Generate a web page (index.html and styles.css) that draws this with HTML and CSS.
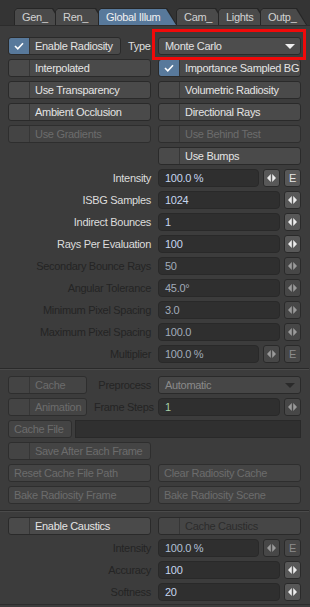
FILE: index.html
```html
<!DOCTYPE html>
<html>
    <head>
        <title>Global Illumination</title>
        <meta charset="utf-8">
        <link rel="stylesheet" href="styles.css">
    </head>
    <body>
        <div class="tabbar">
            <div class="tab gen"><span>Gen_</span></div>
            <div class="tab ren"><span>Ren_</span></div>
            <div class="tab gi on"><span>Global Illum</span></div>
            <div class="tab cam"><span>Cam_</span></div>
            <div class="tab lights"><span>Lights</span></div>
            <div class="tab outp"><span>Outp_</span></div>
        </div>

        <div class="panel">
            <div class="grid">
                <div class="pair">
                    <div class="btn chk w113"><i class="box on"><svg width="10" height="8" viewBox="0 0 10 8"><polyline points="1,4 3.8,6.8 9,1.2" fill="none" stroke="#fff" stroke-width="1.6"/></svg></i><b>Enable Radiosity</b></div>
                    <span class="type">Type</span>
                </div>
                <div class="drop mark">Monte Carlo<i class="tri"></i></div>

                <div class="btn chk"><i class="box"></i><b>Interpolated</b></div>
                <div class="btn chk"><i class="box on"><svg width="10" height="8" viewBox="0 0 10 8"><polyline points="1,4 3.8,6.8 9,1.2" fill="none" stroke="#fff" stroke-width="1.6"/></svg></i><b>Importance Sampled BG</b></div>

                <div class="btn chk"><i class="box"></i><b>Use Transparency</b></div>
                <div class="btn chk"><i class="box"></i><b>Volumetric Radiosity</b></div>

                <div class="btn chk"><i class="box"></i><b>Ambient Occlusion</b></div>
                <div class="btn chk"><i class="box"></i><b>Directional Rays</b></div>

                <div class="btn chk dim"><i class="box"></i><b>Use Gradients</b></div>
                <div class="btn chk dim"><i class="box"></i><b>Use Behind Test</b></div>

                <div></div>
                <div class="btn chk"><i class="box"></i><b>Use Bumps</b></div>

                <div class="lbl">Intensity</div>
                <div class="val"><span class="field">100.0 %</span><span class="arr"><svg width="9" height="8" viewBox="0 0 9 8"><path d="M0 4L3.8 0V8ZM5.2 0L9 4L5.2 8Z"/></svg></span><span class="arr">E</span></div>

                <div class="lbl">ISBG Samples</div>
                <div class="val"><span class="field">1024</span><span class="arr"><svg width="9" height="8" viewBox="0 0 9 8"><path d="M0 4L3.8 0V8ZM5.2 0L9 4L5.2 8Z"/></svg></span></div>

                <div class="lbl">Indirect Bounces</div>
                <div class="val"><span class="field">1</span><span class="arr"><svg width="9" height="8" viewBox="0 0 9 8"><path d="M0 4L3.8 0V8ZM5.2 0L9 4L5.2 8Z"/></svg></span></div>

                <div class="lbl">Rays Per Evaluation</div>
                <div class="val"><span class="field">100</span><span class="arr"><svg width="9" height="8" viewBox="0 0 9 8"><path d="M0 4L3.8 0V8ZM5.2 0L9 4L5.2 8Z"/></svg></span></div>

                <div class="lbl dim">Secondary Bounce Rays</div>
                <div class="val off"><span class="field">50</span><span class="arr"><svg width="9" height="8" viewBox="0 0 9 8"><path d="M0 4L3.8 0V8ZM5.2 0L9 4L5.2 8Z"/></svg></span></div>

                <div class="lbl dim">Angular Tolerance</div>
                <div class="val off"><span class="field">45.0°</span><span class="arr"><svg width="9" height="8" viewBox="0 0 9 8"><path d="M0 4L3.8 0V8ZM5.2 0L9 4L5.2 8Z"/></svg></span></div>

                <div class="lbl dim">Minimum Pixel Spacing</div>
                <div class="val off"><span class="field">3.0</span><span class="arr"><svg width="9" height="8" viewBox="0 0 9 8"><path d="M0 4L3.8 0V8ZM5.2 0L9 4L5.2 8Z"/></svg></span></div>

                <div class="lbl dim">Maximum Pixel Spacing</div>
                <div class="val off"><span class="field">100.0</span><span class="arr"><svg width="9" height="8" viewBox="0 0 9 8"><path d="M0 4L3.8 0V8ZM5.2 0L9 4L5.2 8Z"/></svg></span></div>

                <div class="lbl dim">Multiplier</div>
                <div class="val off"><span class="field">100.0 %</span><span class="arr"><svg width="9" height="8" viewBox="0 0 9 8"><path d="M0 4L3.8 0V8ZM5.2 0L9 4L5.2 8Z"/></svg></span><span class="arr">E</span></div>
            </div>

            <div class="sep s1"></div>

            <div class="grid cache">
                <div class="pair">
                    <div class="btn chk dim w79"><i class="box"></i><b>Cache</b></div>
                    <span class="lbl dim grow">Preprocess</span>
                </div>
                <div class="drop off">Automatic<i class="tri"></i></div>

                <div class="pair">
                    <div class="btn chk dim w79"><i class="box"></i><b>Animation</b></div>
                    <span class="lbl dim grow">Frame Steps</span>
                </div>
                <div class="val off"><span class="field green">1</span><span class="arr"><svg width="9" height="8" viewBox="0 0 9 8"><path d="M0 4L3.8 0V8ZM5.2 0L9 4L5.2 8Z"/></svg></span></div>

                <div class="file">
                    <div class="btn dim w64">Cache File</div>
                    <span class="field blank"></span>
                </div>

                <div class="btn chk dim"><i class="box"></i><b>Save After Each Frame</b></div>
                <div></div>

                <div class="btn dim">Reset Cache File Path</div>
                <div class="btn dim">Clear Radiosity Cache</div>

                <div class="btn dim">Bake Radiosity Frame</div>
                <div class="btn dim">Bake Radiosity Scene</div>
            </div>

            <div class="sep s2"></div>

            <div class="grid">
                <div class="btn chk"><i class="box"></i><b>Enable Caustics</b></div>
                <div class="btn chk dark"><i class="box"></i><b>Cache Caustics</b></div>

                <div class="lbl dim">Intensity</div>
                <div class="val off"><span class="field soft">100.0 %</span><span class="arr"><svg width="9" height="8" viewBox="0 0 9 8"><path d="M0 4L3.8 0V8ZM5.2 0L9 4L5.2 8Z"/></svg></span><span class="arr">E</span></div>

                <div class="lbl dim">Accuracy</div>
                <div class="val"><span class="field">100</span><span class="arr"><svg width="9" height="8" viewBox="0 0 9 8"><path d="M0 4L3.8 0V8ZM5.2 0L9 4L5.2 8Z"/></svg></span></div>

                <div class="lbl dim">Softness</div>
                <div class="val"><span class="field">20</span><span class="arr"><svg width="9" height="8" viewBox="0 0 9 8"><path d="M0 4L3.8 0V8ZM5.2 0L9 4L5.2 8Z"/></svg></span></div>
            </div>
        </div>
    </body>
</html>
```

FILE: styles.css
```css
body {
    margin: 0;
    background: #3c3c3c;
    font-family: "Liberation Sans", Arial, sans-serif;
    font-size: 11px;
    letter-spacing: -0.3px;
    color: #e2e2e2;
}

/* tabs */
.tabbar {
    display: flex;
    height: 25px;
    padding: 8px 0 0 14px;
    box-sizing: border-box;
    background: #343434;
}
.tab {
    height: 17px;
    margin-right: -8px;
    padding: 1px 1px 0 1px;
    box-sizing: border-box;
    background: #262626;
    clip-path: polygon(0 100%, 0 3px, 3px 0, calc(100% - 10px) 0, 100% 100%);
}
.tab span {
    display: block;
    height: 100%;
    padding-left: 7px;
    line-height: 16px;
    background: #4a4a4a;
    color: #d2d2d2;
    white-space: nowrap;
    clip-path: polygon(0 100%, 0 2px, 2px 0, calc(100% - 10px) 0, 100% 100%);
}
.tab.on {
    position: relative;
    z-index: 1;
}
.tab.on span {
    background: #58799b;
    color: #f0f0f0;
}
.gen { width: 49px; }
.ren { width: 51px; }
.gi { width: 79px; margin-right: -1px; }
.cam { width: 50px; }
.lights { width: 50px; }
.outp { width: 47px; }

/* panel */
.panel {
    border-top: 1px solid #2c2c2c;
    border-bottom: 1px solid #2c2c2c;
    padding: 11px 9px 3px 8px;
}
.grid {
    display: grid;
    grid-template-columns: 143px 143px;
    grid-auto-rows: 18px;
    column-gap: 7px;
    row-gap: 4px;
}
.sep {
    border-top: 1px solid #2a2a2a;
    border-bottom: 1px solid #4a4a4a;
    margin: 0 -8px;
}
.s1 {
    margin-top: 5px;
    margin-bottom: 6px;
}
.s2 {
    margin-top: 6px;
    margin-bottom: 5px;
}

/* buttons */
.btn {
    box-sizing: border-box;
    height: 18px;
    border: 1px solid #2a2a2a;
    border-radius: 3px;
    background: #4a4a4a;
    line-height: 16px;
    padding: 0 5px;
    color: #e4e4e4;
    white-space: nowrap;
    overflow: hidden;
}
.btn.chk {
    display: flex;
    padding: 0;
}
.btn b {
    font-weight: normal;
    padding-left: 5px;
}
.box {
    display: flex;
    align-items: center;
    justify-content: center;
    width: 20px;
    flex: none;
    border-right: 1px solid #363636;
    border-radius: 2px 0 0 2px;
}
.box.on {
    background: #58799b;
}
.btn.dim {
    background: #444444;
    color: #6c6c6c;
    border-color: #2e2e2e;
}
.btn.dark {
    background: #464646;
    color: #2c2c2c;
}
.w113 { width: 113px; flex: none; }
.w79 { width: 79px; flex: none; }
.w64 { width: 64px; flex: none; }

.pair {
    display: flex;
    gap: 7px;
    align-items: center;
}
.type {
    color: #dedede;
    white-space: nowrap;
}
.file {
    grid-column: 1 / 3;
    display: flex;
    gap: 3px;
}

/* dropdown */
.drop {
    box-sizing: border-box;
    display: flex;
    align-items: center;
    justify-content: space-between;
    border: 1px solid #2a2a2a;
    border-radius: 3px;
    background: #4d4d4d;
    padding: 0 5px 0 6px;
    color: #e2e2e2;
}
.tri {
    width: 0;
    height: 0;
    border-left: 5px solid transparent;
    border-right: 5px solid transparent;
    border-top: 5px solid #f0f0f0;
}
.drop.off {
    background: #464646;
    color: #8a8a8a;
}
.drop.off .tri {
    border-top-color: #2a2a2a;
}
.mark {
    position: relative;
}
.mark::after {
    content: "";
    position: absolute;
    left: -7px;
    right: -6px;
    top: -9px;
    bottom: -6px;
    border: 3px solid #f00a0a;
}

/* labels and values */
.lbl {
    text-align: right;
    line-height: 18px;
    color: #dcdcdc;
    white-space: nowrap;
}
.lbl.dim {
    color: #242424;
}
.grow {
    flex: 1;
}
.val {
    display: flex;
    gap: 4px;
}
.field {
    flex: 1;
    box-sizing: border-box;
    border: 1px solid #292929;
    border-radius: 4px;
    background: #2f2f2f;
    padding-left: 6px;
    line-height: 16px;
    color: #c6d6f0;
}
.field.blank {
    background: #303030;
    border-radius: 0;
}
.arr {
    box-sizing: border-box;
    width: 17px;
    flex: none;
    display: flex;
    align-items: center;
    justify-content: center;
    border: 1px solid #2a2a2a;
    border-radius: 3px;
    background: #585858;
    color: #e6e6e6;
    fill: #ececec;
}
.val.off .field {
    color: #a2acba;
}
.val.off .field.green {
    color: #a8d0a8;
}
.val.off .field.soft {
    color: #b2c0d6;
}
.val.off .arr {
    background: #474747;
    color: #8c8c8c;
    fill: #9a9a9a;
}
```
